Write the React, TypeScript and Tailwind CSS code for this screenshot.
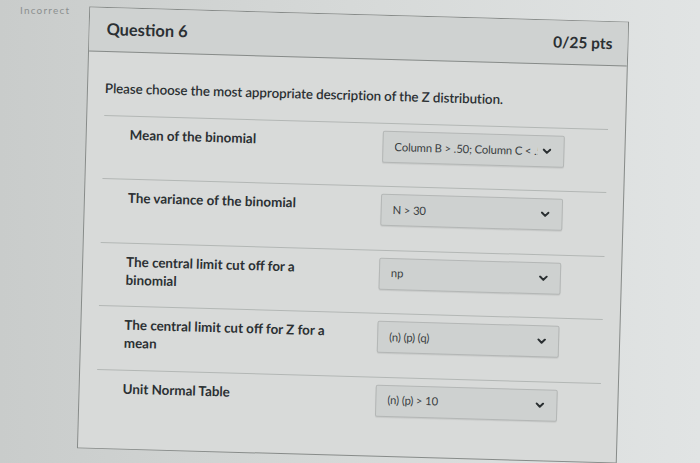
const rows: { label: string; value: string }[] = [
  { label: "Mean of the binomial", value: "Column B > .50; Column C < .50" },
  { label: "The variance of the binomial", value: "N > 30" },
  { label: "The central limit cut off for a binomial", value: "np" },
  { label: "The central limit cut off for Z for a mean", value: "(n) (p) (q)" },
  { label: "Unit Normal Table", value: "(n) (p) > 10" },
];

function Chevron() {
  return (
    <svg width="9" height="6" viewBox="0 0 9 6" className="shrink-0 text-[#2a2f31]">
      <path d="M1.2 1.2 L4.5 4.5 L7.8 1.2" stroke="currentColor" strokeWidth="2" fill="none" strokeLinecap="round" strokeLinejoin="round" />
    </svg>
  );
}

function Select({ value }: { value: string }) {
  return (
    <div className="mt-[7px] flex h-[32px] w-[182px] items-center gap-[5px] rounded-[2px] border border-[#b4b7b6] bg-[#ced1d0] pl-[11px] pr-[12px] shadow-[0_1px_1px_rgba(0,0,0,0.08)]">
      <span className="flex-1 overflow-hidden whitespace-nowrap text-[11.3px] tracking-[-0.15px] text-[#3a3f42]">{value}</span>
      <Chevron />
    </div>
  );
}

export default function App() {
  return (
    <div className="flex h-[463px] w-[700px] items-start overflow-hidden bg-gradient-to-r from-[#c9cccb] via-[#d6d9d8] to-[#e1e4e4] font-['Lato','Open_Sans',sans-serif] text-[#2b3033]">
      <div className="w-[83px] shrink-0 pl-[20px] pt-[4px] text-[10px] leading-[12px] tracking-[1.2px] text-[#8c908f]">Incorrect</div>

      <div className="mt-[14px] h-[442px] w-[540px] shrink-0 rotate-[1.6deg] border border-[#878b89] bg-[#d8dad9]">
        <div className="flex h-[44px] items-center justify-between border-b border-[#878b89] bg-[#cfd2d1] pl-[17px] pr-[15px]">
          <span className="text-[16.4px] font-bold">Question 6</span>
          <span className="text-[15.5px] font-bold">0/25 pts</span>
        </div>

        <div className="px-[17px] pt-[27px]">
          <p className="text-[13.4px] font-semibold leading-[18px] tracking-[-0.1px]">
            Please choose the most appropriate description of the Z distribution.
          </p>

          <div className="mt-[18px]">
            {rows.map((r) => (
              <div key={r.label} className="flex h-[63.4px] items-start border-t border-[#b3b7b5] pl-[26px]">
                <div className="w-[253px] shrink-0 pt-[9px]">
                  <div className="max-w-[212px] text-[13.4px] font-bold leading-[18px]">{r.label}</div>
                </div>
                <Select value={r.value} />
              </div>
            ))}
          </div>
        </div>
      </div>
    </div>
  );
}
